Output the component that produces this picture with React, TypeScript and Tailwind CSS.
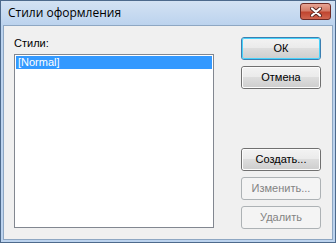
import React from "react";

const ui = { fontFamily: '"Liberation Sans", Arial, sans-serif' };

function Btn({
  label,
  primary,
  disabled,
  className,
}: {
  label: string;
  primary?: boolean;
  disabled?: boolean;
  className?: string;
}) {
  if (disabled) {
    return (
      <div
        className={`h-[23px] w-[80px] rounded-[3px] border border-[#adb2b5] bg-[#f4f4f4] flex items-center justify-center text-[11px] text-[#838383] ${className ?? ""}`}
      >
        {label}
      </div>
    );
  }
  return (
    <div
      className={`h-[23px] w-[80px] rounded-[3px] border ${
        primary ? "border-[#3c7fb1]" : "border-[#707070]"
      } ${className ?? ""}`}
    >
      <div
        className={`h-full w-full rounded-[2px] border ${
          primary ? "border-[#48d2fb]" : "border-[#fcfcfc]"
        } bg-[linear-gradient(#f2f2f2_0%,#ebebeb_45%,#dddddd_50%,#cfcfcf_100%)] flex items-center justify-center text-[11px] text-black`}
      >
        {label}
      </div>
    </div>
  );
}

export default function App() {
  return (
    <div className="w-[336px] h-[243px] bg-white" style={ui}>
      <div className="h-full w-full border border-[#4d6a8c] bg-[#bcd3ee] flex flex-col px-[2px] pb-[2px]">
        <div className="h-[24px] -mx-[2px] px-[7px] flex items-center justify-between bg-[linear-gradient(#d3e2f3,#bcd3ee)]">
          <span
            className="text-[12px] text-black"
            style={{ fontFamily: '"Open Sans", "Noto Sans", sans-serif' }}
          >
            Стили оформления
          </span>
          <div className="-mr-[3px] -mt-[3px] h-[17px] w-[31px] rounded-[3px] border border-[#6d2b26] bg-[linear-gradient(#e8a493_0%,#d47c68_45%,#c0452f_55%,#d06650_100%)] flex items-center justify-center">
            <svg width="12" height="10" viewBox="0 0 12 10">
              <path
                d="M2 1.5 L10 8.5 M10 1.5 L2 8.5"
                stroke="#5a2620"
                strokeWidth="4"
                strokeLinecap="round"
              />
              <path
                d="M2 1.5 L10 8.5 M10 1.5 L2 8.5"
                stroke="#ffffff"
                strokeWidth="2.2"
                strokeLinecap="round"
              />
            </svg>
          </div>
        </div>
        <div className="flex-1 border border-[#8ea7c3] bg-[#f0f0f0] flex px-[10px] pt-[11px]">
          <div className="flex flex-col">
            <div className="h-[13px] leading-[13px] text-[11px] text-black">Стили:</div>
            <div className="mt-[4px] h-[174px] w-[200px] border border-[#828790] bg-white p-[1px]">
              <div className="h-[13px] leading-[13px] bg-[#3399ff] text-white text-[11px] pl-[2px]">
                [Normal]
              </div>
            </div>
          </div>
          <div className="ml-[27px] flex flex-col">
            <Btn label="ОК" primary />
            <Btn label="Отмена" className="mt-[6px]" />
            <Btn label="Создать..." className="mt-[59px]" />
            <Btn label="Изменить..." disabled className="mt-[6px]" />
            <Btn label="Удалить" disabled className="mt-[6px]" />
          </div>
        </div>
      </div>
    </div>
  );
}
